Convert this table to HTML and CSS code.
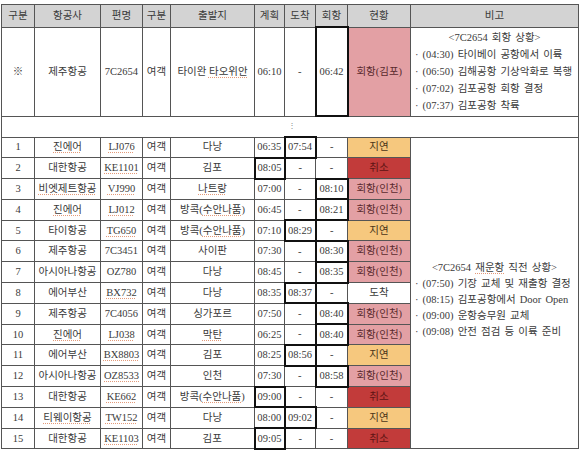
FILE: index.html
```html
<!DOCTYPE html>
<html lang="ko">
<head>
<meta charset="utf-8">
<title>운항 현황</title>
<link rel="stylesheet" href="styles.css">
</head>
<body>
<div class="wrap">
<table class="sched">
  <colgroup>
    <col class="w-no"><col class="w-air"><col class="w-flt"><col class="w-type"><col class="w-from">
    <col class="w-plan"><col class="w-arr"><col class="w-ret"><col class="w-stat"><col class="w-note">
  </colgroup>
  <thead>
    <tr class="hd">
      <th>구분</th><th>항공사</th><th>편명</th><th>구분</th><th>출발지</th><th>계획</th><th>도착</th><th>회항</th><th>현황</th><th>비고</th>
    </tr>
  </thead>
  <tbody>
    <tr class="main">
      <td>※</td><td>제주항공</td><td>7C2654</td><td>여객</td><td>타이완 <span class="sp">타오위안</span></td>
      <td>06:10</td><td>-</td><td class="mark">06:42</td><td class="st ret">회항(김포)</td>
      <td class="note">
        <div class="ttl">&lt;7C2654 회항 상황&gt;</div>
        <div>· (04:30) 타이베이 공항에서 이륙</div>
        <div>· (06:50) 김해공항 기상악화로 복행</div>
        <div>· (07:02) 김포공항 회항 결정</div>
        <div>· (07:37) 김포공항 착륙</div>
      </td>
    </tr>
    <tr class="gap"><td colspan="10"><span class="dots">⋮</span></td></tr>
    <tr>
      <td>1</td><td><span class="sp">진에어</span></td><td><span class="sp">LJ076</span></td><td>여객</td><td>다낭</td>
      <td>06:35</td><td class="mark">07:54</td><td>-</td><td class="st delay">지연</td>
      <td class="note note2" rowspan="15">
        <div class="ttl">&lt;7C2654 <span class="sp">재운항</span> 직전 상황&gt;</div>
        <div>· (07:50) 기장 교체 및 재출항 결정</div>
        <div>· (08:15) 김포공항에서 Door Open</div>
        <div>· (09:00) 운항승무원 교체</div>
        <div>· (09:08) 안전 점검 등 이륙 준비</div>
      </td>
    </tr>
    <tr>
      <td>2</td><td>대한항공</td><td><span class="sp">KE1101</span></td><td>여객</td><td>김포</td>
      <td class="mark">08:05</td><td>-</td><td>-</td><td class="st cancel">취소</td>
    </tr>
    <tr>
      <td>3</td><td><span class="sp">비엣제트항공</span></td><td><span class="sp">VJ990</span></td><td>여객</td><td><span class="sp">나트랑</span></td>
      <td>07:00</td><td>-</td><td class="mark">08:10</td><td class="st ret">회항(인천)</td>
    </tr>
    <tr>
      <td>4</td><td><span class="sp">진에어</span></td><td><span class="sp">LJ012</span></td><td>여객</td><td>방콕(<span class="sp">수안나품</span>)</td>
      <td>06:45</td><td>-</td><td class="mark">08:21</td><td class="st ret">회항(인천)</td>
    </tr>
    <tr>
      <td>5</td><td>타이항공</td><td><span class="sp">TG650</span></td><td>여객</td><td>방콕(<span class="sp">수안나품</span>)</td>
      <td>07:10</td><td class="mark">08:29</td><td>-</td><td class="st delay">지연</td>
    </tr>
    <tr>
      <td>6</td><td>제주항공</td><td>7C3451</td><td>여객</td><td>사이판</td>
      <td>07:30</td><td>-</td><td class="mark">08:30</td><td class="st ret">회항(인천)</td>
    </tr>
    <tr>
      <td>7</td><td>아시아나항공</td><td>OZ780</td><td>여객</td><td>다낭</td>
      <td>08:45</td><td>-</td><td class="mark">08:35</td><td class="st ret">회항(인천)</td>
    </tr>
    <tr>
      <td>8</td><td>에어부산</td><td><span class="sp">BX732</span></td><td>여객</td><td>다낭</td>
      <td>08:35</td><td class="mark">08:37</td><td>-</td><td class="st">도착</td>
    </tr>
    <tr>
      <td>9</td><td>제주항공</td><td>7C4056</td><td>여객</td><td>싱가포르</td>
      <td>07:50</td><td>-</td><td class="mark">08:40</td><td class="st ret">회항(인천)</td>
    </tr>
    <tr>
      <td>10</td><td><span class="sp">진에어</span></td><td><span class="sp">LJ038</span></td><td>여객</td><td><span class="sp">막탄</span></td>
      <td>06:25</td><td>-</td><td class="mark">08:40</td><td class="st ret">회항(인천)</td>
    </tr>
    <tr>
      <td>11</td><td>에어부산</td><td><span class="sp">BX8803</span></td><td>여객</td><td>김포</td>
      <td>08:25</td><td class="mark">08:56</td><td>-</td><td class="st delay">지연</td>
    </tr>
    <tr>
      <td>12</td><td>아시아나항공</td><td><span class="sp">OZ8533</span></td><td>여객</td><td>인천</td>
      <td>07:30</td><td>-</td><td class="mark">08:58</td><td class="st ret">회항(인천)</td>
    </tr>
    <tr>
      <td>13</td><td>대한항공</td><td><span class="sp">KE662</span></td><td>여객</td><td>방콕(<span class="sp">수안나품</span>)</td>
      <td class="mark">09:00</td><td>-</td><td>-</td><td class="st cancel">취소</td>
    </tr>
    <tr>
      <td>14</td><td><span class="sp">티웨이항공</span></td><td><span class="sp">TW152</span></td><td>여객</td><td>다낭</td>
      <td>08:00</td><td class="mark">09:02</td><td>-</td><td class="st delay">지연</td>
    </tr>
    <tr>
      <td>15</td><td>대한항공</td><td><span class="sp">KE1103</span></td><td>여객</td><td>김포</td>
      <td class="mark">09:05</td><td>-</td><td>-</td><td class="st cancel">취소</td>
    </tr>
  </tbody>
</table>
</div>
</body>
</html>
```

FILE: styles.css
```css
html, body {
  margin: 0;
  padding: 0;
  background: #ffffff;
}

.wrap {
  padding: 4px 0 0 1px;
}

.sched {
  border-collapse: collapse;
  table-layout: fixed;
  width: 577px;
  font-family: "Liberation Serif", "Noto Sans CJK KR", serif;
  font-size: 10.5px;
  color: #3a3a3a;
  border: 1px solid #3a3a3a;
}

.w-no { width: 33px; }
.w-air { width: 66px; }
.w-flt { width: 42px; }
.w-type { width: 28px; }
.w-from { width: 84px; }
.w-plan { width: 30px; }
.w-arr { width: 31px; }
.w-ret { width: 32px; }
.w-stat { width: 63px; }
.w-note { width: 168px; }

.sched th,
.sched td {
  border: 1px solid #555555;
  padding: 0;
  text-align: center;
  vertical-align: middle;
  white-space: nowrap;
  overflow: hidden;
  line-height: 14px;
}

.sched .hd th {
  height: 21px;
  background: #d3d3d3;
  font-weight: normal;
  color: #3a3a3a;
}

.sched tbody tr td {
  height: 18.8px;
}

.sched tbody tr.main td {
  height: 87px;
}

.sched tbody tr.gap td {
  height: 19px;
}

.dots {
  font-size: 8px;
  color: #888888;
  line-height: 8px;
  position: relative;
  top: -2px;
  left: 2px;
}

.sched td.mark {
  border: 2px solid #111111;
}

.sched td.ret {
  background: #e3a0a4;
  color: #5a2a2e;
}

.sched td.delay {
  background: #f6c87e;
  color: #4a3518;
}

.sched td.cancel {
  background: #c23b3a;
  color: #5e1414;
}

.sched td.note {
  text-align: left;
  padding: 0 0 0 4px;
  line-height: 17px;
  word-spacing: 1.5px;
  color: #3a3a3a;
}

.sched td.note .ttl {
  text-align: center;
  padding-right: 4px;
}

.sched td.note2 {
  line-height: 16px;
  padding-top: 14px;
}

.sp {
  text-decoration: underline dotted #e39a7a;
  text-underline-offset: 2px;
}
```
